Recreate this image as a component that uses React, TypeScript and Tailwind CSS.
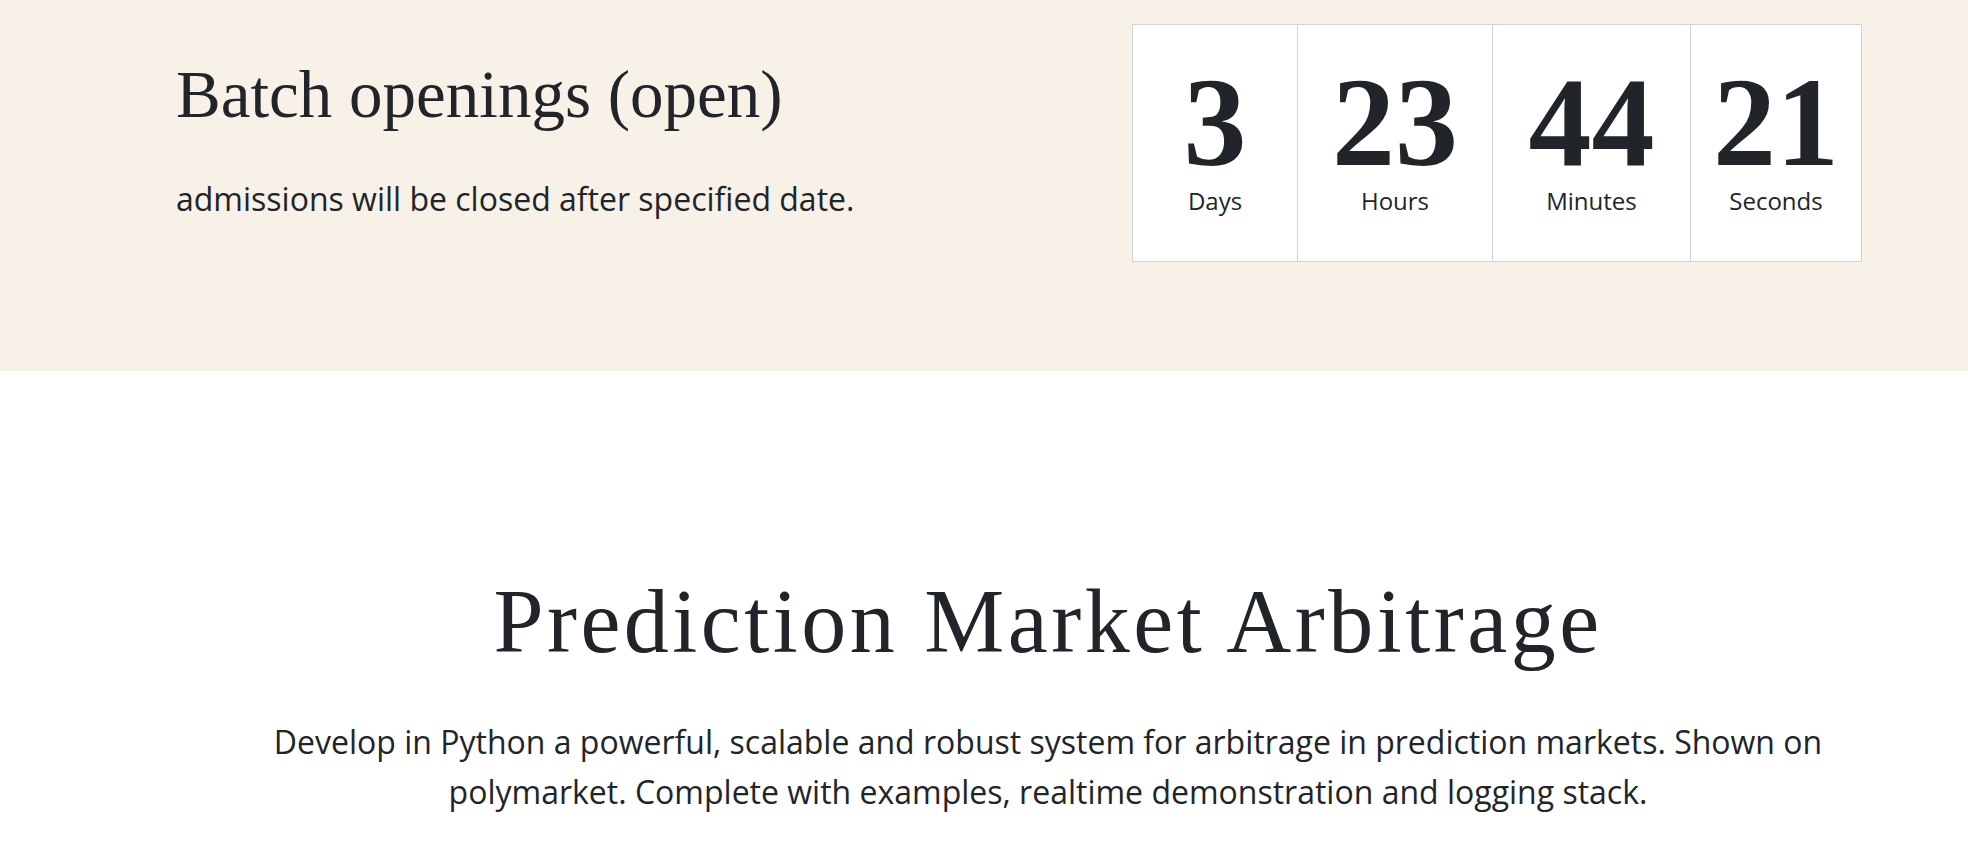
const serif = "font-['Liberation_Serif',serif]";
const sans = "font-['Open_Sans',sans-serif]";

const countdown = [
  { value: "3", label: "Days", width: "w-[164px]" },
  { value: "23", label: "Hours", width: "w-[195px]" },
  { value: "44", label: "Minutes", width: "w-[198px]" },
  { value: "21", label: "Seconds", width: "w-[171px]" }
];

export default function App() {
  return (
    <div className="min-h-[844px] bg-white text-[#212529]">
      <section className="flex h-[371px] justify-between bg-[#f8f1e8] pl-[176px] pr-[106px]">
        <div className="pt-[61px]">
          <h2 className={`${serif} text-[67px] leading-none font-normal`}>
            Batch openings (open)
          </h2>
          <p className={`${sans} mt-[55px] text-[32px] leading-none`}>
            admissions will be closed after specified date.
          </p>
        </div>

        <div className="pt-[24px]">
          <div className="flex border border-[#d0d3dc] bg-white">
            {countdown.map((item, index) => (
              <CountdownCell
                key={item.label}
                value={item.value}
                label={item.label}
                width={item.width}
                first={index === 0}
              />
            ))}
          </div>
        </div>
      </section>

      <section className="flex flex-col items-center pl-[160px] pr-[32px] pt-[206px]">
        <h1 className={`${serif} text-[90px] leading-none font-normal tracking-[3.5px]`}>
          Prediction Market Arbitrage
        </h1>
        <p className={`${sans} mt-[50px] max-w-[1600px] text-center text-[32px] leading-[50px]`}>
          Develop in Python a powerful, scalable and robust system for arbitrage in prediction
          markets. Shown on polymarket. Complete with examples, realtime demonstration and
          logging stack.
        </p>
      </section>
    </div>
  );
}

function CountdownCell({
  value,
  label,
  width,
  first
}: {
  value: string;
  label: string;
  width: string;
  first: boolean;
}) {
  return (
    <div
      className={`flex ${width} flex-col items-center pb-[48px] pt-[35px] ${
        first ? "" : "border-l border-[#d0d3dc]"
      }`}
    >
      <span className={`${serif} text-[126px] font-bold leading-none`}>{value}</span>
      <span className={`${sans} mt-[3px] text-[24px] leading-none`}>{label}</span>
    </div>
  );
}
